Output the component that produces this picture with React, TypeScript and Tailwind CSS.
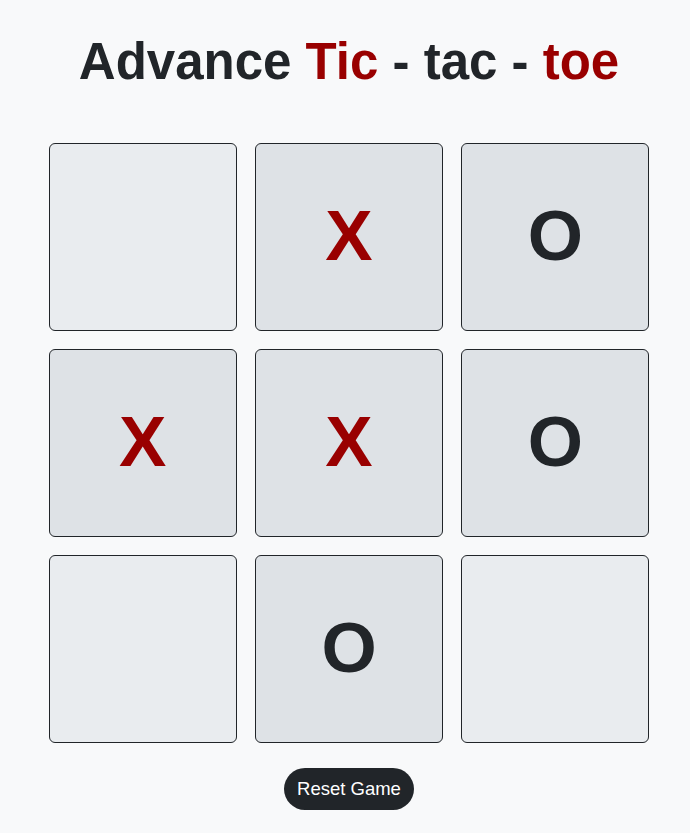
import React from "react";

const board: (string | null)[] = [null, "X", "O", "X", "X", "O", null, "O", null];

export default function App() {
  return (
    <div className="min-h-screen w-full bg-[#f8f9fa] pl-2 flex flex-col items-center" style={{ fontFamily: '"Liberation Sans", Arial, sans-serif' }}>
      <h1 className="mt-[33px] text-[51px] leading-[58px] font-bold text-[#212529] whitespace-pre">
        Advance <span className="text-[#990000]">Tic</span> - tac - <span className="text-[#990000]">toe</span>
      </h1>
      <div className="mt-[52px] grid w-[601px] grid-cols-3 gap-[18px]">
        {board.map((v, i) => (
          <div
            key={i}
            className={`flex h-[188px] items-center justify-center rounded-md border border-[#212529] pb-[3px] ${v ? "bg-[#dee2e6]" : "bg-[#e9ecef]"}`}
          >
            {v && (
              <span className={`text-[71px] font-bold leading-none ${v === "X" ? "text-[#990000]" : "text-[#212529]"}`}>{v}</span>
            )}
          </div>
        ))}
      </div>
      <button className="mt-[25px] h-[42px] rounded-full bg-[#212529] px-[13px] text-[18.5px] text-white">
        Reset Game
      </button>
    </div>
  );
}
